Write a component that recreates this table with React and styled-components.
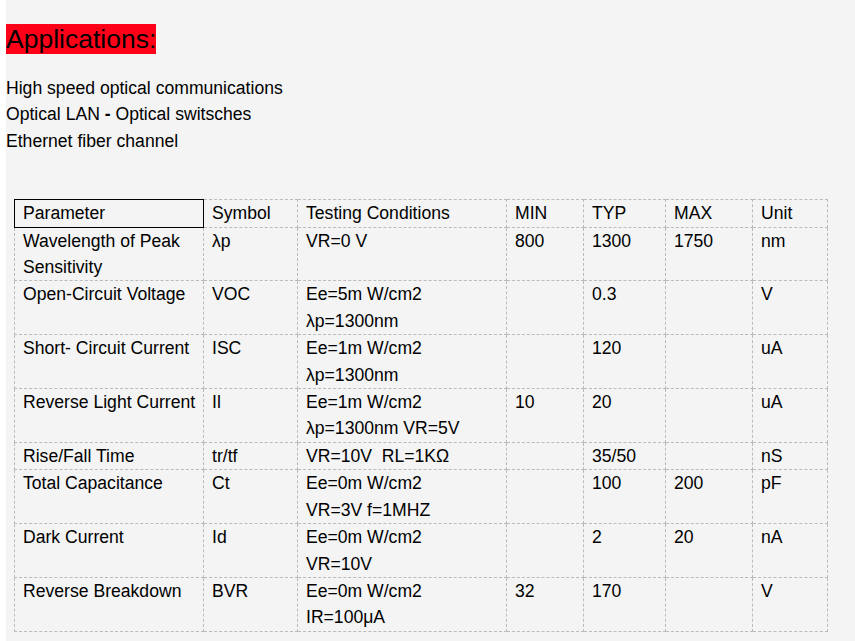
import React from 'react';
import styled, { createGlobalStyle } from 'styled-components';

const GlobalStyle = createGlobalStyle`
  html, body { margin: 0; padding: 0; background: #fff; }
  body { font-family: "Liberation Sans", Arial, sans-serif; color: #000; }
`;

const Page = styled.div`
  margin-left: 6px;
  min-height: 641px;
  background: #f4f4f4;
  padding: 24px 0 11px;
  box-sizing: border-box;
`;

const Heading = styled.h2`
  display: inline-block;
  margin: 0;
  background: #ff0019;
  font-size: 26.5px;
  font-weight: normal;
  line-height: 30px;
`;

const AppList = styled.div`
  margin-top: 21px;
  font-size: 17.6px;
  line-height: 26.4px;
`;

const SpecTable = styled.table`
  margin: 45px 0 0 8px;
  width: 813px;
  border-collapse: collapse;
  table-layout: fixed;
  font-size: 17.6px;
  line-height: 26.4px;
`;

const Cell = styled.td`
  border: 1px dashed #bbb;
  padding: 0 8px;
  vertical-align: top;
  white-space: nowrap;
  ${p => p.$boxed && 'border: 1px solid #000;'}
`;

const widths = [189, 94, 209, 77, 82, 87, 75];

const head = ['Parameter', 'Symbol', 'Testing Conditions', 'MIN', 'TYP', 'MAX', 'Unit'];

const rows = [
  [['Wavelength of Peak', 'Sensitivity'], 'λp', ['VR=0 V'], '800', '1300', '1750', 'nm'],
  [['Open-Circuit Voltage'], 'VOC', ['Ee=5m W/cm2', 'λp=1300nm'], '', '0.3', '', 'V'],
  [['Short- Circuit Current'], 'ISC', ['Ee=1m W/cm2', 'λp=1300nm'], '', '120', '', 'uA'],
  [['Reverse Light Current'], 'Il', ['Ee=1m W/cm2', 'λp=1300nm VR=5V'], '10', '20', '', 'uA'],
  [['Rise/Fall Time'], 'tr/tf', ['VR=10V\u00a0 RL=1KΩ'], '', '35/50', '', 'nS'],
  [['Total Capacitance'], 'Ct', ['Ee=0m W/cm2', 'VR=3V f=1MHZ'], '', '100', '200', 'pF'],
  [['Dark Current'], 'Id', ['Ee=0m W/cm2', 'VR=10V'], '', '2', '20', 'nA'],
  [['Reverse Breakdown'], 'BVR', ['Ee=0m W/cm2', 'IR=100μA'], '32', '170', '', 'V'],
];

const Lines = ({ items }) => items.map((t, i) => (
  <React.Fragment key={i}>{i > 0 && <br />}{t}</React.Fragment>
));

export default function App() {
  return (
    <>
      <GlobalStyle />
      <Page>
        <Heading>Applications:</Heading>
        <AppList>
          High speed optical communications<br />
          Optical LAN <b>-</b> Optical switsches<br />
          Ethernet fiber channel
        </AppList>
        <SpecTable>
          <colgroup>
            {widths.map((w, i) => <col key={i} style={{ width: w }} />)}
          </colgroup>
          <tbody>
            <tr>
              {head.map((h, i) => <Cell key={i} $boxed={i === 0}>{h}</Cell>)}
            </tr>
            {rows.map((r, i) => (
              <tr key={i}>
                <Cell><Lines items={r[0]} /></Cell>
                <Cell>{r[1]}</Cell>
                <Cell><Lines items={r[2]} /></Cell>
                <Cell>{r[3]}</Cell>
                <Cell>{r[4]}</Cell>
                <Cell>{r[5]}</Cell>
                <Cell>{r[6]}</Cell>
              </tr>
            ))}
          </tbody>
        </SpecTable>
      </Page>
    </>
  );
}
